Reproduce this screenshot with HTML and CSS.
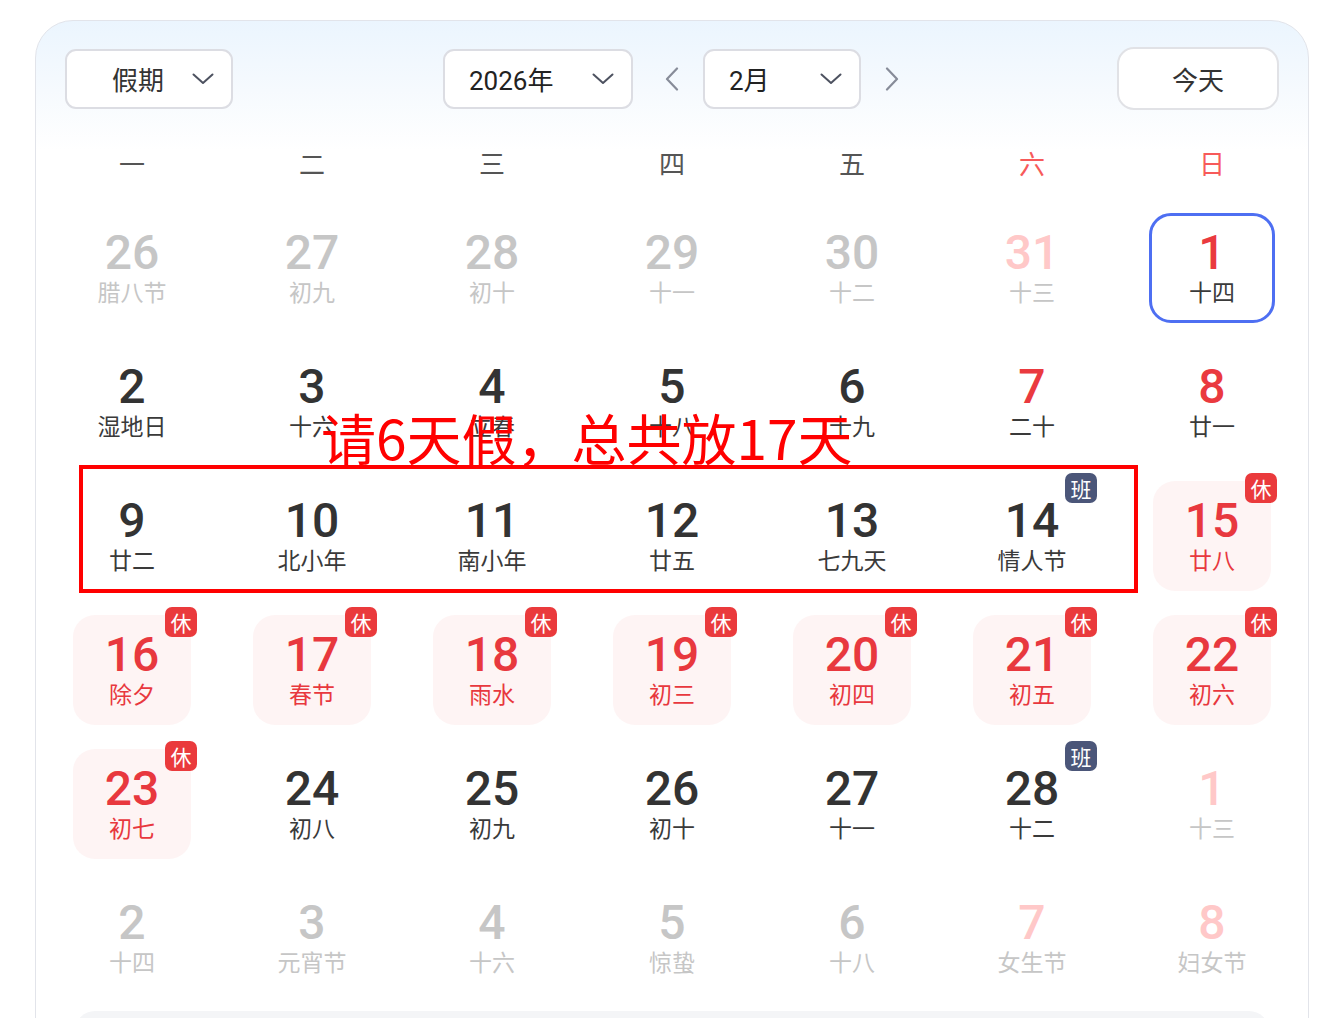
FILE: index.html
```html
<!DOCTYPE html>
<html lang="zh-CN">
<head>
<meta charset="utf-8">
<title>日历</title>
<link rel="stylesheet" href="styles.css">
</head>
<body>
<div class="card">
  <div class="header">
    <div class="select sel-holiday"><span>假期</span><svg class="chev" viewBox="0 0 22 12"><path d="M1.5 1.5 L11 10 L20.5 1.5"/></svg></div>
    <div class="mid">
      <div class="select sel-year"><span>2026年</span><svg class="chev" viewBox="0 0 22 12"><path d="M1.5 1.5 L11 10 L20.5 1.5"/></svg></div>
      <div class="arrow arrow-prev"><svg viewBox="0 0 14 24"><path d="M12 1.5 L2 12 L12 22.5"/></svg></div>
      <div class="select sel-month"><span>2月</span><svg class="chev" viewBox="0 0 22 12"><path d="M1.5 1.5 L11 10 L20.5 1.5"/></svg></div>
      <div class="arrow arrow-next"><svg viewBox="0 0 14 24"><path d="M2 1.5 L12 12 L2 22.5"/></svg></div>
    </div>
    <div class="today-btn">今天</div>
  </div>

  <div class="weekdays">
    <div>一</div><div>二</div><div>三</div><div>四</div><div>五</div><div class="we">六</div><div class="we">日</div>
  </div>

  <div class="grid">
    <div class="cell other"><div class="num">26</div><div class="lunar">腊八节</div></div>
    <div class="cell other"><div class="num">27</div><div class="lunar">初九</div></div>
    <div class="cell other"><div class="num">28</div><div class="lunar">初十</div></div>
    <div class="cell other"><div class="num">29</div><div class="lunar">十一</div></div>
    <div class="cell other"><div class="num">30</div><div class="lunar">十二</div></div>
    <div class="cell other weekend"><div class="num">31</div><div class="lunar">十三</div></div>
    <div class="cell weekend selected"><div class="num">1</div><div class="lunar">十四</div></div>

    <div class="cell"><div class="num">2</div><div class="lunar">湿地日</div></div>
    <div class="cell"><div class="num">3</div><div class="lunar">十六</div></div>
    <div class="cell"><div class="num">4</div><div class="lunar">立春</div></div>
    <div class="cell"><div class="num">5</div><div class="lunar">十八</div></div>
    <div class="cell"><div class="num">6</div><div class="lunar">十九</div></div>
    <div class="cell weekend"><div class="num">7</div><div class="lunar">二十</div></div>
    <div class="cell weekend"><div class="num">8</div><div class="lunar">廿一</div></div>

    <div class="cell"><div class="num">9</div><div class="lunar">廿二</div></div>
    <div class="cell"><div class="num">10</div><div class="lunar">北小年</div></div>
    <div class="cell"><div class="num">11</div><div class="lunar">南小年</div></div>
    <div class="cell"><div class="num">12</div><div class="lunar">廿五</div></div>
    <div class="cell"><div class="num">13</div><div class="lunar">七九天</div></div>
    <div class="cell"><div class="num">14</div><div class="lunar">情人节</div><span class="badge work">班</span></div>
    <div class="cell holiday"><div class="num">15</div><div class="lunar">廿八</div><span class="badge rest">休</span></div>

    <div class="cell holiday"><div class="num">16</div><div class="lunar">除夕</div><span class="badge rest">休</span></div>
    <div class="cell holiday"><div class="num">17</div><div class="lunar">春节</div><span class="badge rest">休</span></div>
    <div class="cell holiday"><div class="num">18</div><div class="lunar">雨水</div><span class="badge rest">休</span></div>
    <div class="cell holiday"><div class="num">19</div><div class="lunar">初三</div><span class="badge rest">休</span></div>
    <div class="cell holiday"><div class="num">20</div><div class="lunar">初四</div><span class="badge rest">休</span></div>
    <div class="cell holiday"><div class="num">21</div><div class="lunar">初五</div><span class="badge rest">休</span></div>
    <div class="cell holiday"><div class="num">22</div><div class="lunar">初六</div><span class="badge rest">休</span></div>

    <div class="cell holiday"><div class="num">23</div><div class="lunar">初七</div><span class="badge rest">休</span></div>
    <div class="cell"><div class="num">24</div><div class="lunar">初八</div></div>
    <div class="cell"><div class="num">25</div><div class="lunar">初九</div></div>
    <div class="cell"><div class="num">26</div><div class="lunar">初十</div></div>
    <div class="cell"><div class="num">27</div><div class="lunar">十一</div></div>
    <div class="cell"><div class="num">28</div><div class="lunar">十二</div><span class="badge work">班</span></div>
    <div class="cell other weekend"><div class="num">1</div><div class="lunar">十三</div></div>

    <div class="cell other"><div class="num">2</div><div class="lunar">十四</div></div>
    <div class="cell other"><div class="num">3</div><div class="lunar">元宵节</div></div>
    <div class="cell other"><div class="num">4</div><div class="lunar">十六</div></div>
    <div class="cell other"><div class="num">5</div><div class="lunar">惊蛰</div></div>
    <div class="cell other"><div class="num">6</div><div class="lunar">十八</div></div>
    <div class="cell other weekend"><div class="num">7</div><div class="lunar">女生节</div></div>
    <div class="cell other weekend"><div class="num">8</div><div class="lunar">妇女节</div></div>
  </div>

  <div class="footer-bar"></div>
</div>

<div class="note-box"></div>
<div class="note-text">请6天假，总共放17天</div>
</body>
</html>
```

FILE: styles.css
```css
html, body {
  margin: 0;
  padding: 0;
  overflow: hidden;
  background: #ffffff;
}
body {
  width: 1332px;
  height: 1018px;
  position: relative;
  font-family: "Noto Sans CJK SC", "Noto Sans", sans-serif;
  color: #333;
}

.card {
  margin: 20px 0 0 35px;
  width: 1274px;
  box-sizing: border-box;
  border: 1px solid #e2e4ea;
  border-radius: 38px;
  background: linear-gradient(180deg, #ebf5fe 0px, #f6fafe 70px, #ffffff 130px);
  padding: 0 6px;
}

.header {
  display: flex;
  align-items: center;
  padding: 26px 23px 0;
  height: 63px;
}
.select {
  box-sizing: border-box;
  height: 60px;
  border: 2px solid #dcdde3;
  border-radius: 11px;
  background: #fff;
  display: flex;
  align-items: center;
  justify-content: space-between;
  padding: 0 17px 0 24px;
  font-size: 26px;
  color: #222;
}
.select span {
  font-family: Roboto, "Noto Sans CJK SC", sans-serif;
}
.sel-holiday {
  width: 168px;
  padding-left: 45px;
  color: #333;
}
.sel-holiday span { font-family: "Noto Sans CJK SC", sans-serif; }
.sel-year { width: 190px; }
.sel-month { width: 158px; }
.chev {
  width: 22px;
  height: 12px;
  fill: none;
  stroke: #4d5260;
  stroke-width: 2;
  stroke-linecap: round;
  stroke-linejoin: round;
}
.mid {
  display: flex;
  align-items: center;
  margin-left: 210px;
}
.arrow {
  width: 70px;
  height: 60px;
  display: flex;
  align-items: center;
  justify-content: center;
}
.arrow svg {
  width: 14px;
  height: 24px;
  fill: none;
  stroke: #878c99;
  stroke-width: 2.2;
  stroke-linecap: round;
  stroke-linejoin: round;
}
.arrow-prev { padding-left: 8px; box-sizing: border-box; }
.arrow-next { width: 62px; }
.today-btn {
  margin-left: auto;
  box-sizing: border-box;
  width: 162px;
  height: 63px;
  border: 2px solid #e1e2e6;
  border-radius: 17px;
  background: #fff;
  display: flex;
  align-items: center;
  justify-content: center;
  font-size: 26px;
  color: #333;
}

.weekdays {
  display: grid;
  grid-template-columns: repeat(7, 180px);
  margin-top: 18px;
  height: 70px;
  line-height: 70px;
  text-align: center;
  font-size: 26px;
  color: #555;
}
.weekdays .we { color: #f75a5a; }

.grid {
  display: grid;
  grid-template-columns: repeat(7, 180px);
  grid-auto-rows: 110px;
  row-gap: 24px;
  padding-top: 15px;
}
.cell {
  position: relative;
  justify-self: center;
  width: 118px;
  height: 110px;
  box-sizing: border-box;
  border-radius: 22px;
  display: flex;
  flex-direction: column;
  align-items: center;
  justify-content: center;
  padding-bottom: 2px;
  color: #333;
}
.num {
  font-family: Roboto, "Noto Sans", sans-serif;
  font-weight: 500;
  font-size: 48px;
  line-height: 48px;
  color: #333;
}
.lunar {
  font-size: 23px;
  line-height: 28px;
  color: #3a3a3a;
}
.weekend .num { color: #ea3a3f; }
.other .num { color: #c6c6c6; }
.other .lunar { color: #c6c6c6; }
.other.weekend .num { color: #ffc8c8; }
.holiday { background: #fef4f4; }
.holiday .num, .holiday .lunar { color: #e8383e; }
.selected {
  width: 126px;
  border: 3px solid #4e6ff2;
}

.badge {
  position: absolute;
  top: -8px;
  right: -6px;
  width: 32px;
  height: 30px;
  border-radius: 7px;
  color: #fff;
  font-size: 21px;
  line-height: 30px;
  text-align: center;
}
.badge.rest { background: #ea3a3c; }
.badge.work { background: #4b5679; }

.footer-bar {
  margin: 18px 33px 0;
  height: 80px;
  border-radius: 20px;
  background: #f4f5f7;
}

.note-box {
  position: absolute;
  left: 79px;
  top: 465px;
  width: 1059px;
  height: 128px;
  box-sizing: border-box;
  border: 4px solid #ff0000;
}
.note-text {
  position: absolute;
  left: 321px;
  top: 409px;
  font-size: 55px;
  line-height: 55px;
  color: #ff0000;
  white-space: nowrap;
}
```
